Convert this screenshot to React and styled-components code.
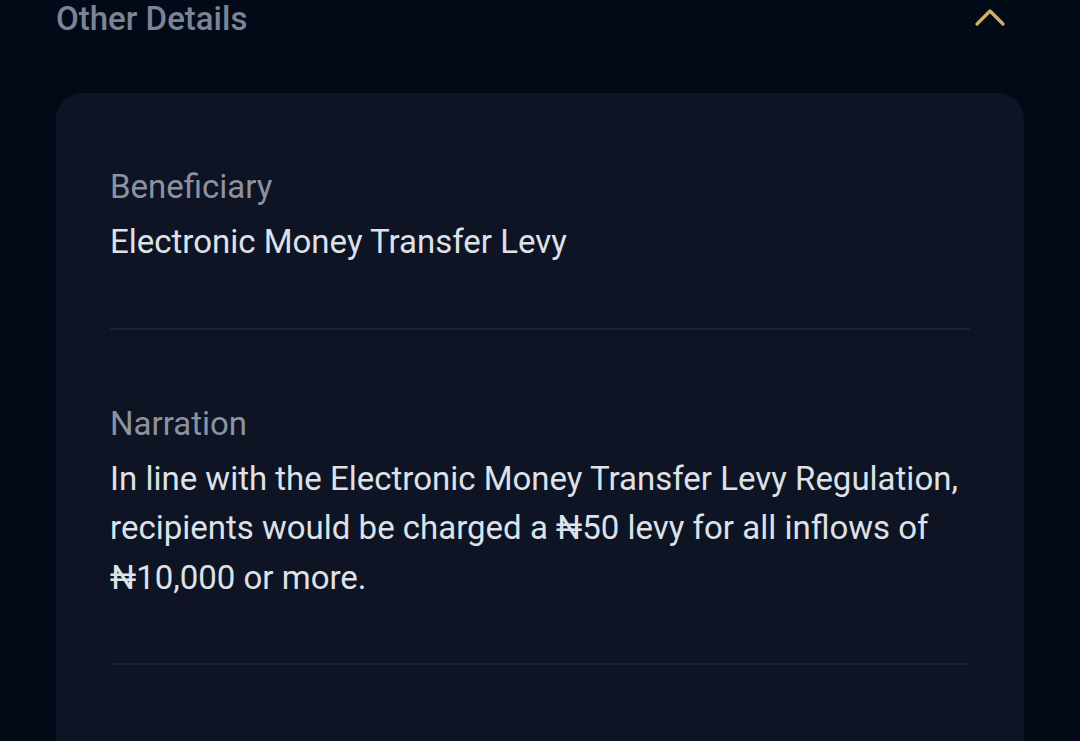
import styled, { createGlobalStyle } from 'styled-components'

const GlobalStyle = createGlobalStyle`
  html, body {
    margin: 0;
    background: #020a18;
  }
  body {
    font-family: Roboto, "Noto Sans", sans-serif;
    overflow: hidden;
  }
`

const details = [
  { label: 'Beneficiary', value: 'Electronic Money Transfer Levy' },
  {
    label: 'Narration',
    value: 'In line with the Electronic Money Transfer Levy Regulation, recipients would be charged a ₦50 levy for all inflows of ₦10,000 or more.',
  },
]

export default function App() {
  return (
    <StyledPage>
      <GlobalStyle />
      <StyledHeader>
        <StyledTitle>Other Details</StyledTitle>
        <StyledToggle aria-label="Collapse">
          <svg width="32" height="20" viewBox="0 0 32 20" fill="none">
            <path d="M3 17 L16 4 L29 17" stroke="#d4b162" strokeWidth="3.2" strokeLinecap="round" strokeLinejoin="round" />
          </svg>
        </StyledToggle>
      </StyledHeader>
      <StyledCard>
        {details.map(item => (
          <StyledSection key={item.label}>
            <StyledLabel>{item.label}</StyledLabel>
            <StyledValue>{item.value}</StyledValue>
          </StyledSection>
        ))}
        <StyledSection />
      </StyledCard>
    </StyledPage>
  )
}

const StyledPage = styled.div`
  height: 741px;
  overflow: hidden;
  padding: 0 56px;
  box-sizing: border-box;
`

const StyledHeader = styled.div`
  display: flex;
  align-items: center;
  justify-content: space-between;
  height: 38px;
  padding-right: 18px;
`

const StyledTitle = styled.h3`
  margin: 0;
  font-size: 33px;
  font-weight: 500;
  line-height: 38px;
  color: #7b8496;
`

const StyledToggle = styled.button`
  display: flex;
  background: none;
  border: 0;
  padding: 0;
  margin-top: -4px;
  cursor: pointer;
`

const StyledCard = styled.div`
  margin-top: 55px;
  background: #0e1424;
  border-radius: 26px;
  padding: 0 54px;
  min-height: 700px;
`

const StyledSection = styled.div`
  padding: 74px 0 61px;
  border-bottom: 2px solid #1a2232;

  &:last-child {
    border-bottom: 0;
  }
`

const StyledLabel = styled.div`
  font-size: 33px;
  line-height: 40px;
  color: #8b92a1;
  margin-bottom: 10px;
`

const StyledValue = styled.div`
  font-size: 33px;
  line-height: 49.5px;
  color: #dde1e8;
`
